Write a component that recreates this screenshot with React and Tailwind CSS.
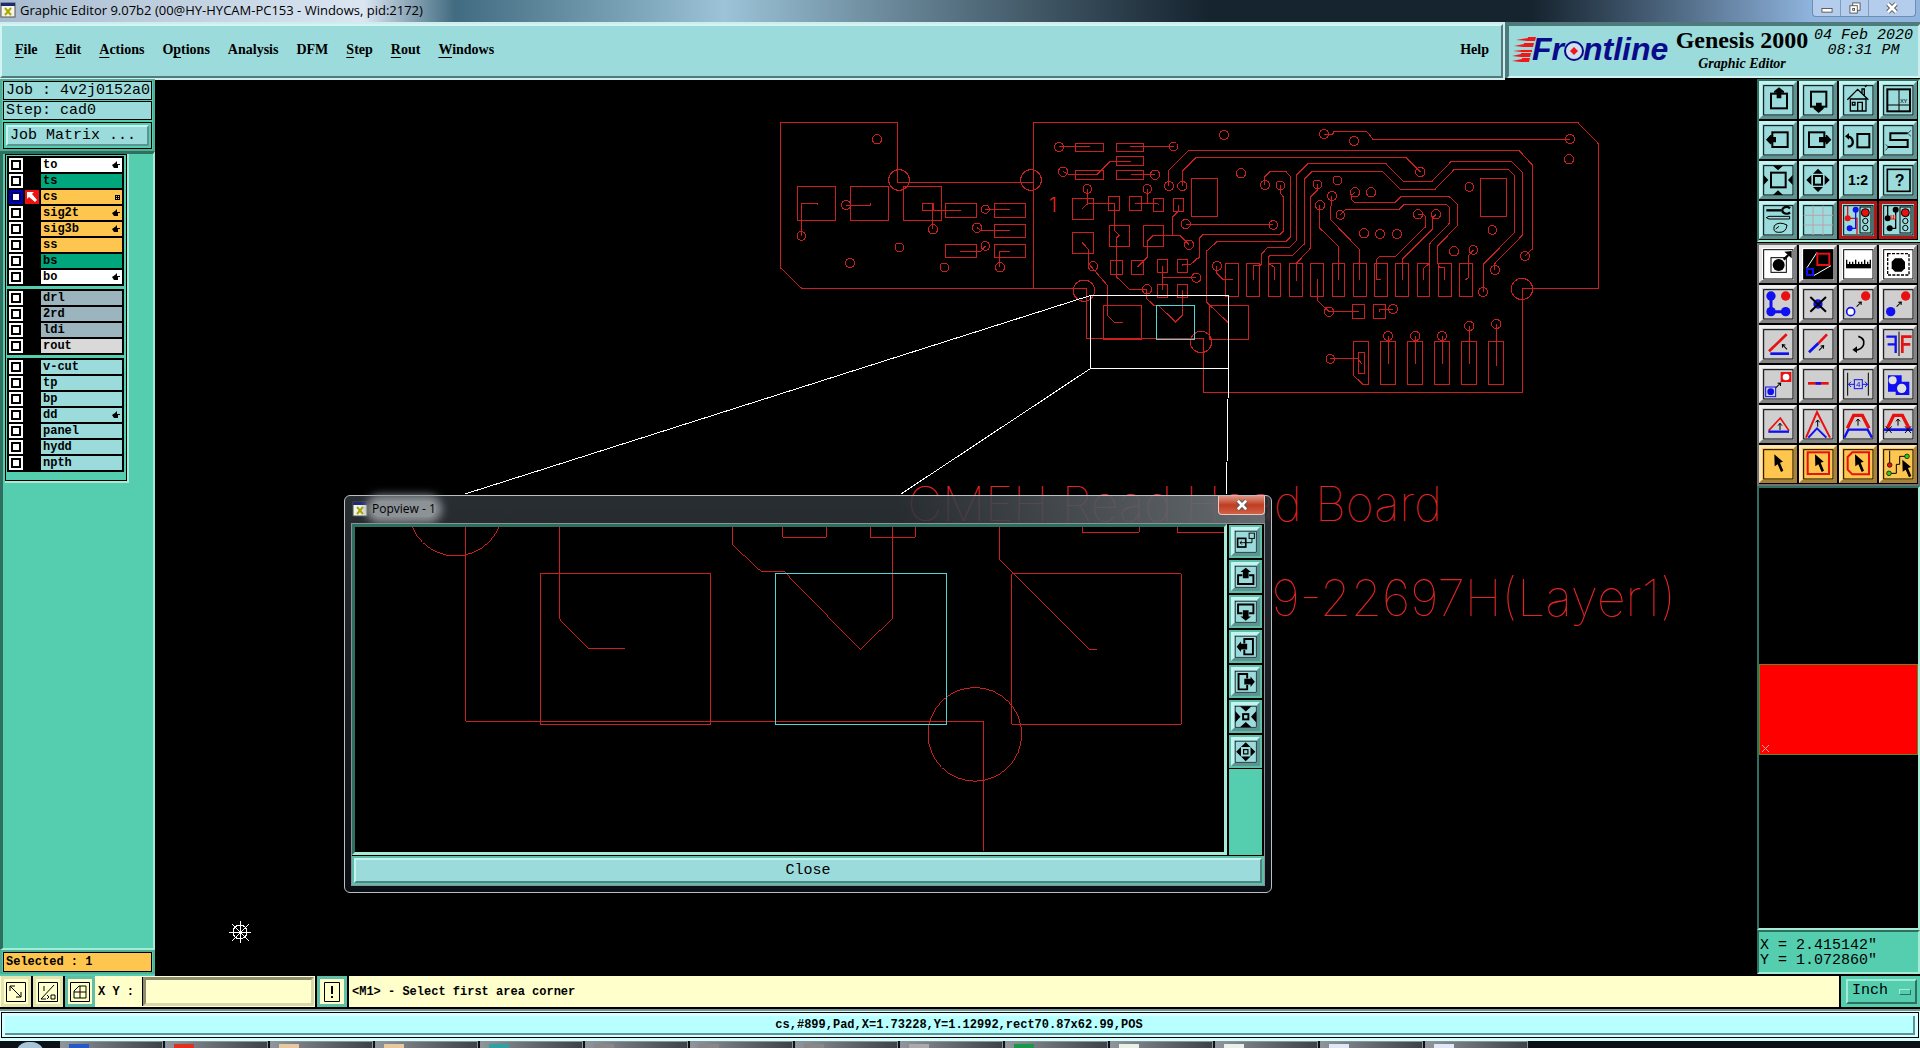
import { useState } from 'react';

const menus = [
  ['F', 'ile'],
  ['E', 'dit'],
  ['A', 'ctions'],
  ['', 'O', 'p', 'tions'],
  ['', 'Analysis'],
  ['', 'DFM'],
  ['S', 'tep'],
  ['R', 'out'],
  ['W', 'indows'],
];

const layerGroups = [
  [
    { name: 'to', bg: 'bg-white', hand: true },
    { name: 'ts', bg: 'bg-[#00a67c]' },
    { name: 'cs', bg: 'bg-[#ffc64f]', active: true },
    { name: 'sig2t', bg: 'bg-[#ffc64f]', hand: true },
    { name: 'sig3b', bg: 'bg-[#ffc64f]', hand: true },
    { name: 'ss', bg: 'bg-[#ffc64f]' },
    { name: 'bs', bg: 'bg-[#00a67c]' },
    { name: 'bo', bg: 'bg-white', hand: true },
  ],
  [
    { name: 'drl', bg: 'bg-[#9bb4be]' },
    { name: '2rd', bg: 'bg-[#9bb4be]' },
    { name: 'ldi', bg: 'bg-[#9bb4be]' },
    { name: 'rout', bg: 'bg-[#d9d9d9]' },
  ],
  [
    { name: 'v-cut', bg: 'bg-[#9bdbdb]' },
    { name: 'tp', bg: 'bg-[#9bdbdb]' },
    { name: 'bp', bg: 'bg-[#9bdbdb]' },
    { name: 'dd', bg: 'bg-[#9bdbdb]', hand: true },
    { name: 'panel', bg: 'bg-[#9bdbdb]' },
    { name: 'hydd', bg: 'bg-[#9bdbdb]' },
    { name: 'npth', bg: 'bg-[#9bdbdb]' },
  ],
];

const MONO = "font-['Liberation_Mono',monospace]";
const RED = '#e81010';
const BLUE = '#1010f0';

// bevel styles shared by the tool buttons
const tones = {
  teal: 'bg-[#9bdbdb] border-t-[#c4f4f2] border-l-[#c4f4f2] border-b-[#5c9494] border-r-[#5c9494]',
  red: 'bg-[#9bdbdb] border-[#b01818]',
  white: 'bg-white border-t-[#e8e8e8] border-l-[#e8e8e8] border-b-[#808080] border-r-[#808080]',
  gray: 'bg-[#cfcfcf] border-t-[#f0f0f0] border-l-[#f0f0f0] border-b-[#848484] border-r-[#848484]',
  orange: 'bg-[#ffc64f] border-t-[#ffe6b0] border-l-[#ffe6b0] border-b-[#a8823a] border-r-[#a8823a]',
};

const Cursor = ({ x = 0, y = 0 }) => (
  <path d="M46 28L72 50L63 53L73 77L66 81L56 58L47 64Z" fill="#000" transform={`translate(${x} ${y})`} />
);

const TinyArrow = ({ x, y, r = 0 }) => (
  <path d="M0 20V0M-6 7L0 0L6 7" transform={`translate(${x} ${y}) rotate(${r})`} stroke="#000" strokeWidth="3" />
);

const Traffic = () => (
  <g stroke="#000" strokeWidth="3">
    <rect x="63" y="18" width="33" height="78" />
    <circle cx="79" cy="35" r="12" fill={RED} />
    <circle cx="79" cy="60" r="8" />
    <circle cx="79" cy="81" r="8" />
  </g>
);

const viewTools = [
  { label: 'Pan up', icon: <><rect x="36" y="38" width="48" height="44" stroke="#000" strokeWidth="6" /><path d="M60 19L75 31V35H67V52H53V35H45V31Z" fill="#000" /></> },
  { label: 'Pan down', icon: <><rect x="36" y="32" width="46" height="45" stroke="#000" strokeWidth="6" /><path d="M59 96L74 83V78H68V65H51V78H44V83Z" fill="#000" /></> },
  { label: 'Home', icon: <><path d="M25 56L56 25L88 56M34 54H81V90H34ZM56 90V64H70V90M40 64H48V72H40ZM69 36V24H76V44M78 18L84 12" stroke="#000" strokeWidth="4" /></> },
  { label: 'Zoom to XY', icon: <><rect x="25" y="25" width="68" height="66" stroke="#000" strokeWidth="6" /><path d="M60 25V91M25 72H93" stroke="#000" strokeWidth="3" /><text x="64" y="66" fontSize="18" fill="#000">XY</text></> },
  { label: 'Pan left', icon: <><rect x="40" y="34" width="46" height="44" stroke="#000" strokeWidth="6" /><path d="M21 56L34 42H38V48H51V64H38V70H34Z" fill="#000" /></> },
  { label: 'Pan right', icon: <><rect x="30" y="34" width="46" height="44" stroke="#000" strokeWidth="6" /><path d="M97 56L84 42H80V48H60V64H80V70H84Z" fill="#000" /></> },
  { label: 'Previous view', icon: <><rect x="55" y="39" width="36" height="40" stroke="#000" strokeWidth="6" /><path d="M26 76H33Q43 72 41 60Q39 48 26 46" stroke="#000" strokeWidth="7" /><path d="M18 46L30 36V56Z" fill="#000" /></> },
  { label: 'Serpentine', icon: <><path d="M86 37H34V57H86V78H26" stroke="#000" strokeWidth="6" /><path d="M86 37L96 28M86 37L96 46M28 78L20 70M28 78L20 88" stroke="#000" strokeWidth="2" /></> },
  { label: 'Zoom in', icon: <><rect x="36" y="35" width="44" height="44" stroke="#000" strokeWidth="6" /><path d="M42 14H72L57 28ZM42 102H72L57 88ZM14 42V72L28 57ZM101 42V72L87 57Z" fill="#000" /></> },
  { label: 'Zoom out', icon: <><rect x="45" y="45" width="24" height="26" stroke="#000" strokeWidth="6" /><path d="M42 38H72L57 23ZM42 78H72L57 93ZM37 42V72L22 57ZM77 42V72L92 57Z" fill="#000" /></> },
  { label: 'Scale 1:2', icon: <text x="57" y="72" fontSize="42" fontWeight="bold" textAnchor="middle" fill="#000" fontFamily="Liberation Sans">1:2</text> },
  { label: 'Help', icon: <><rect x="25" y="25" width="68" height="66" stroke="#000" strokeWidth="5" /><text x="62" y="76" fontSize="48" fontWeight="bold" textAnchor="middle" fill="#000" fontFamily="Liberation Sans">?</text></> },
  { label: 'Settings', icon: <><path d="M22 28H66" stroke="#000" strokeWidth="7" /><path d="M93 22A13 10 0 1 0 93 34" stroke="#000" strokeWidth="7" /><path d="M22 50L30 46H92V54H30ZM84 72Q60 60 46 74Q40 94 58 94Q82 96 84 72M50 84L60 76" stroke="#000" strokeWidth="3" /></> },
  { label: 'Grid', icon: <path d="M42 14V102M72 14V102M14 43H102M14 72H102" stroke="#b8a4ac" strokeWidth="3" /> },
  { label: 'Online DRC', tone: 'red', icon: <><path d="M26 14V52H54V100" stroke={RED} strokeWidth="4" /><circle cx="26" cy="52" r="9" fill={RED} /><path d="M50 26V82H32" stroke={BLUE} strokeWidth="4" /><circle cx="50" cy="26" r="9" fill={BLUE} /><circle cx="32" cy="82" r="9" fill={BLUE} /><Traffic /></> },
  { label: 'Net DRC', tone: 'red', icon: <><path d="M26 14V52M50 26V82H32" stroke="#000" strokeWidth="4" /><circle cx="26" cy="52" r="9" fill="#000" /><circle cx="50" cy="26" r="9" fill="#000" /><circle cx="32" cy="82" r="9" fill="#000" /><path d="M34 54H50M36 42V54M43 42V54M49 42V54" stroke={RED} strokeWidth="3" /><Traffic /></> },
];

const editTools = [
  { label: 'Move feature', tone: 'white', icon: <><rect x="36" y="38" width="46" height="44" stroke="#000" strokeWidth="3" /><circle cx="59" cy="60" r="18" fill="#000" /><path d="M74 44L88 30" stroke="#000" strokeWidth="7" /><path d="M98 18V40L76 20Z" fill="#000" /></> },
  { label: 'Popview', tone: 'white', icon: <><rect x="14" y="14" width="88" height="88" fill="#000" /><path d="M24 68L54 22M44 92L96 62" stroke="#fff" strokeWidth="3" /><rect x="55" y="26" width="36" height="34" stroke={RED} strokeWidth="6" /><rect x="24" y="72" width="18" height="18" stroke={BLUE} strokeWidth="6" /></> },
  { label: 'Measure', tone: 'white', icon: <><rect x="21" y="57" width="75" height="13" fill="#000" /><path d="M23 44V58M32 50V58M41 50V58M50 44V58M59 50V58M68 50V58M77 44V58M86 50V58M94 44V58" stroke="#000" strokeWidth="4" /></> },
  { label: 'Select area', tone: 'white', icon: <><rect x="26" y="26" width="64" height="64" stroke="#000" strokeWidth="4" strokeDasharray="9 4" /><path d="M48 40H68L78 50V70L68 80H48L38 70V50Z" fill="#000" /></> },
  { label: 'Add feature', icon: <><path d="M36 33V80H80" stroke={BLUE} strokeWidth="9" /><circle cx="36" cy="33" r="14" fill={BLUE} /><circle cx="36" cy="80" r="14" fill={BLUE} /><circle cx="80" cy="80" r="14" fill={BLUE} /><circle cx="80" cy="33" r="14" fill={RED} /></> },
  { label: 'Delete', icon: <><circle cx="57" cy="57" r="14" fill={BLUE} /><path d="M34 36L81 80M81 36L34 80" stroke="#000" strokeWidth="6" /></> },
  { label: 'Copy', icon: <><circle cx="35" cy="80" r="12" stroke={BLUE} strokeWidth="5" fill="#fff" /><circle cx="80" cy="33" r="14" fill={RED} /><TinyArrow x={67} y={51} r={45} /></> },
  { label: 'Move', icon: <><circle cx="35" cy="80" r="14" fill={BLUE} /><circle cx="80" cy="33" r="14" fill={RED} /><TinyArrow x={67} y={51} r={45} /></> },
  { label: 'Rotate', icon: <><path d="M30 79L83 28" stroke={RED} strokeWidth="8" /><path d="M34 86H90" stroke={BLUE} strokeWidth="8" /><TinyArrow x={70} y={59} r={-45} /></> },
  { label: 'Stretch line', icon: <><path d="M58 55L84 28" stroke={RED} strokeWidth="8" /><path d="M30 82L58 55" stroke={BLUE} strokeWidth="8" /><TinyArrow x={74} y={62} r={45} /></> },
  { label: 'Undo', icon: <><path d="M58 34Q78 40 74 58Q70 74 46 76" stroke="#000" strokeWidth="5" /><path d="M40 74L54 64V84Z" fill="#000" /></> },
  { label: 'Mirror', icon: <><path d="M22 35H50V84M26 58H50" stroke={BLUE} strokeWidth="7" /><path d="M60 20V93" stroke="#000" strokeWidth="3" /><path d="M98 35H70V84M70 58H94" stroke={RED} strokeWidth="8" /></> },
  { label: 'Change symbol', icon: <><rect x="65" y="21" width="32" height="30" fill={RED} /><circle cx="81" cy="36" r="10" fill="#fff" /><rect x="20" y="66" width="30" height="29" stroke={BLUE} strokeWidth="3" /><circle cx="35" cy="80" r="10" fill={BLUE} /><TinyArrow x={65} y={54} r={45} /></> },
  { label: 'Break line', icon: <><path d="M27 55H89" stroke={RED} strokeWidth="8" /><path d="M50 55H66" stroke={BLUE} strokeWidth="8" /></> },
  { label: 'Spacing', icon: <><path d="M26 23V92M88 23V92" stroke="#000" strokeWidth="3" /><path d="M28 58H46M70 58H86M36 50L29 58L36 66M78 50L85 58L78 66" stroke={BLUE} strokeWidth="3" /><rect x="46" y="44" width="24" height="27" stroke={BLUE} strokeWidth="3" /><text x="58" y="67" fontSize="24" textAnchor="middle" fill={BLUE} fontFamily="Liberation Sans">4</text></> },
  { label: 'Surface', icon: <><path d="M27 31H68V50H91V90H50V80H27Z" fill={BLUE} /><circle cx="41" cy="46" r="12" fill="#e0e0e0" /><circle cx="68" cy="70" r="14" fill="#e0e0e0" /></> },
  { label: 'Reshape corner', icon: <><path d="M29 77L64 39L90 77" stroke={RED} strokeWidth="5" /><path d="M28 80H90" stroke={BLUE} strokeWidth="7" /><TinyArrow x={63} y={55} /></> },
  { label: 'Reshape peak', icon: <><path d="M21 98L54 21L93 98" stroke={RED} strokeWidth="6" /><path d="M28 98L54 70L82 98" stroke={BLUE} strokeWidth="6" /><TinyArrow x={56} y={45} /></> },
  { label: 'Offset segment', icon: <><path d="M25 70L44 31H70L90 70" stroke={RED} strokeWidth="10" /><path d="M16 98L28 74H86L99 98" stroke={BLUE} strokeWidth="7" /><TinyArrow x={57} y={42} /></> },
  { label: 'Move segment', icon: <><path d="M25 70L44 31H70L90 70" stroke={RED} strokeWidth="10" /><path d="M15 74H101" stroke={BLUE} strokeWidth="8" /><path d="M20 64L38 84M38 64L20 84M78 64L96 84M96 64L78 84" stroke="#000" strokeWidth="3" /><TinyArrow x={57} y={42} /></> },
  { label: 'Single select', tone: 'orange', icon: <Cursor /> },
  { label: 'Frame select', tone: 'orange', icon: <><rect x="26" y="22" width="64" height="65" stroke={RED} strokeWidth="6" /><Cursor x={2} /></> },
  { label: 'Polygon select', tone: 'orange', icon: <><path d="M26 36L40 22H90V88H40L26 74Z" stroke={RED} strokeWidth="6" /><Cursor x={2} /></> },
  { label: 'Net select', tone: 'orange', icon: <><path d="M32 17V60M30 85H52V58H62V34H84" stroke="#000" strokeWidth="3" /><circle cx="32" cy="60" r="7" fill={RED} stroke="#000" strokeWidth="2" /><circle cx="84" cy="34" r="7" fill="#20d020" stroke="#000" strokeWidth="2" /><circle cx="30" cy="85" r="7" fill="#20d020" stroke="#000" strokeWidth="2" /><Cursor x={24} y={16} /></> },
];

// the popview buttons use heavier versions of the pan and zoom drawings
const popTools = [
  { label: 'Popview window', icon: <><rect x="24" y="44" width="34" height="36" stroke="#000" strokeWidth="7" /><rect x="72" y="22" width="22" height="22" stroke="#000" strokeWidth="4" /><path d="M34 62H84V44M42 54L34 62L42 70" stroke="#000" strokeWidth="4" /></> },
  { label: 'Pan up', icon: <><path d="M44 52H26V88H90V52H72" stroke="#000" strokeWidth="8" /><path d="M58 20L80 38H70V64H46V38H36Z" fill="#000" /></> },
  { label: 'Pan down', icon: <><path d="M44 64H26V28H90V64H72" stroke="#000" strokeWidth="8" /><path d="M58 96L80 78H70V52H46V78H36Z" fill="#000" /></> },
  { label: 'Pan left', icon: <><path d="M52 44V26H88V90H52V72" stroke="#000" strokeWidth="8" /><path d="M20 58L38 36V46H64V70H38V80Z" fill="#000" /></> },
  { label: 'Pan right', icon: <><path d="M64 44V26H28V90H64V72" stroke="#000" strokeWidth="8" /><path d="M96 58L78 36V46H52V70H78V80Z" fill="#000" /></> },
  { label: 'Zoom in', icon: <><rect x="47" y="47" width="22" height="22" stroke="#000" strokeWidth="8" /><path d="M34 14H82L58 36ZM34 102H82L58 80ZM14 34V82L36 58ZM102 34V82L80 58Z" fill="#000" /></> },
  { label: 'Zoom out', icon: <><rect x="49" y="49" width="18" height="18" stroke="#000" strokeWidth="5" /><path d="M38 38H78L58 18ZM38 78H78L58 98ZM38 38V78L18 58ZM78 38V78L98 58Z" fill="#000" /></> },
];

function ToolButton({ label, icon, tone = 'teal', small }) {
  return (
    <button
      type="button"
      aria-label={label}
      title={label}
      className={`${small ? 'size-[29px]' : 'size-[38px]'} border-3 ${tones[tone]}`}
    >
      <svg viewBox="9 9 96 96" className="block size-full" fill="none">
        <rect x="14" y="14" width="88" height="88" stroke="#000" strokeWidth="3" />
        {icon}
      </svg>
    </button>
  );
}

function WindowIcon() {
  return (
    <svg viewBox="0 0 16 16" className="size-4 shrink-0">
      <rect x="1" y="1" width="14" height="14" fill="#f4f4e8" stroke="#555" />
      <rect x="1" y="1" width="14" height="3" fill="#202878" />
      <path d="M5 6L11 13M11 6L5 13" stroke="#a8a800" strokeWidth="2" />
    </svg>
  );
}

function TitleBar() {
  return (
    <div className="flex h-[22px] shrink-0 items-center bg-[#416b80]">
      <div className="flex h-full items-center gap-1 bg-linear-to-r from-[#a8bccf] via-[#dbe6f2] via-80% to-[#416b80] pr-8 pb-[2px]">
        <WindowIcon />
        <h1 className="font-['Open_Sans',sans-serif] text-[13px] leading-5 whitespace-nowrap text-black">
          Graphic Editor 9.07b2 (00@HY-HYCAM-PC153 - Windows, pid:2172)
        </h1>
      </div>
      <div className="h-full flex-1 bg-linear-to-r from-[#416b80] from-0% via-[#9cc3d8] via-25% to-[#16242f] to-70%" />
      <div className="h-full w-70 bg-linear-to-r from-[#16242f] to-[#8fb4de]" />
      <div className="flex h-full items-start bg-[#8fb4de] pr-1">
        <div className="flex h-[17px] overflow-hidden rounded-b border border-t-0 border-[#6d8db5] bg-[#b5cdec]">
          <button type="button" aria-label="Minimize" className="flex w-7 items-center justify-center border-r border-[#7f9cc0]">
            <svg viewBox="0 0 13 13" className="size-3"><rect x="1" y="7" width="11" height="4" fill="#fff" stroke="#555" /></svg>
          </button>
          <button type="button" aria-label="Restore" className="flex w-7 items-center justify-center border-r border-[#7f9cc0]">
            <svg viewBox="0 0 13 13" className="size-3" fill="#fff" stroke="#555"><rect x="4" y="1" width="8" height="8" /><rect x="1" y="4" width="8" height="8" /><rect x="4" y="7" width="2" height="2" /></svg>
          </button>
          <button type="button" aria-label="Close" className="flex w-[46px] items-center justify-center">
            <svg viewBox="0 0 13 13" className="size-3"><path d="M2 2L11 11M11 2L2 11" stroke="#555" strokeWidth="5" /><path d="M2 2L11 11M11 2L2 11" stroke="#fff" strokeWidth="3" /></svg>
          </button>
        </div>
      </div>
    </div>
  );
}

function Logo() {
  return (
    <svg viewBox="0 -6 162 44" className="h-11 w-[162px] shrink-0" role="img" aria-label="Frontline">
      <g fill="#f01818">
        <path d="M4 6L16 4V3H24L23 7H16Z M2 12L12 10V9H22L21 13H12Z M1 17L10 16H20V18H10Z M0 22L9 20V19H19L18 23H9Z M0 27L10 25V24H18L17 28H9Z" />
      </g>
      <g fill="#0a0a8c" fontFamily="Liberation Sans" fontWeight="bold" fontStyle="italic" fontSize="32">
        <text x="20" y="26">Fr</text>
        <text x="71" y="26">ntline</text>
      </g>
      <circle cx="62" cy="17" r="9" fill="#cfe0ee" stroke="#0a0a8c" strokeWidth="2" />
      <path d="M62 13L66 17L62 21L58 17Z" fill="#f01818" />
    </svg>
  );
}

function Header() {
  return (
    <header className="flex h-14 shrink-0 bg-[#4f7a7c] pt-[2px] font-['Liberation_Serif',serif] font-bold">
      <nav className="flex min-w-0 flex-1 items-center gap-[18px] border-2 border-t-[#d4f4f2] border-r-[#55797b] border-b-[#55797b] border-l-[#d4f4f2] bg-[#9bdbdb] pr-3 pb-[2px] pl-[13px] text-[14px] outline-2 -outline-offset-0 outline-[#cdeeee]">
        {menus.map((parts) => (
          <button key={parts.join('')} type="button" className="leading-5">
            {parts.map((part, i) => (
              <span
                key={part}
                className={(i === 0 && part) || (parts.length === 4 && i === 2) ? 'underline underline-offset-3' : ''}
              >
                {part}
              </span>
            ))}
          </button>
        ))}
        <button type="button" className="ml-auto leading-5">Help</button>
      </nav>
      <div className="ml-[4px] flex w-[413px] shrink-0 items-center border-2 border-t-[#4f7a7c] border-r-[#cdeeee] border-b-[#d4f4f2] border-l-[#4f7a7c] bg-[#9bdbdb] pb-[2px] pl-[3px]">
        <Logo />
        <div className="flex w-[136px] shrink-0 flex-col items-center">
          <span className="text-[24px] leading-7 whitespace-nowrap">Genesis 2000</span>
          <span className="text-[14px] leading-5 italic">Graphic Editor</span>
        </div>
        <div className={`${MONO} ml-1 self-start pt-[2px] text-center text-[15px] leading-[15px] font-normal whitespace-nowrap italic`}>
          04 Feb 2020
          <br />
          08:31 PM
        </div>
      </div>
    </header>
  );
}

function LayerRow({ layer }) {
  return (
    <label className="flex h-[14px] gap-[2px]">
      <input
        type="checkbox"
        defaultChecked={layer.active}
        className="size-[14px] appearance-none border-2 border-white bg-white ring-2 ring-black ring-inset checked:border-[#0000b8] checked:ring-[#00006a]"
      />
      <span className={`size-[14px] ${layer.active ? 'bg-[#f01010]' : ''}`}>
        {layer.active && (
          <svg viewBox="0 0 14 14" className="size-full"><path d="M2 2H9L7 4L12 10L10 12L4 7L2 9Z" fill="#fff" /></svg>
        )}
      </span>
      <span className={`flex w-[81px] items-center justify-between px-[2px] ${layer.bg}`}>
        <span className="leading-[14px]">{layer.name}</span>
        {layer.hand && (
          <svg viewBox="0 0 8 8" className="size-2"><path d="M0 4L3 2L5 0V3H8V4H6V7H2Z" fill="#000" /></svg>
        )}
        {layer.active && (
          <svg viewBox="0 0 5 5" className="size-[5px]" shapeRendering="crispEdges"><path d="M.5 .5H4.5V4.5H.5ZM2.5 .5V4.5M.5 2.5H4.5" fill="none" stroke="#000" /></svg>
        )}
      </span>
    </label>
  );
}

function Sidebar() {
  return (
    <aside className={`${MONO} flex w-[155px] shrink-0 flex-col bg-[#55ceb0] text-black`}>
      <div className="border-2 border-[#4fae95] px-px text-[15px]">
        <div className="h-[19px] border border-black bg-[#9bdbdb] px-[2px] leading-[17px] whitespace-nowrap">Job : 4v2j0152a0</div>
        <div className="mt-px h-[19px] border border-black bg-[#9bdbdb] px-[2px] leading-[17px]">Step: cad0</div>
        <div className="mt-[2px] border border-black p-[2px]">
          <button
            type="button"
            className="block h-[21px] w-full border-2 border-t-[#c4f4f2] border-r-[#5c9494] border-b-[#5c9494] border-l-[#c4f4f2] bg-[#9bdbdb] pl-[2px] text-left leading-[17px]"
          >
            Job Matrix ...
          </button>
        </div>
      </div>
      <div className="flex flex-1 flex-col items-start border-t-3 border-r-2 border-b-2 border-l-3 border-t-[#2f6f60] border-r-[#a5ecd6] border-b-[#a5ecd6] border-l-[#2f6f60] pl-[2px]">
        <div className="border-r-2 border-b-2 border-[#a5ecd6]">
          <div className="flex flex-col gap-[3px] border border-black pt-px pr-[2px] pb-2 pl-px text-[12px] font-bold">
            {layerGroups.map((group) => (
              <div key={group[0].name} className="flex flex-col gap-[2px] bg-black p-[2px]">
                {group.map((layer) => (
                  <LayerRow key={layer.name} layer={layer} />
                ))}
              </div>
            ))}
          </div>
        </div>
      </div>
      <div className="mb-[2px] border-2 border-[#4fae95] px-px">
        <div className="h-5 border border-black bg-[#ffc64f] px-[2px] text-[12px] leading-[18px] font-bold">Selected : 1</div>
      </div>
    </aside>
  );
}

// vias on the left half of the board, [x, y, r]
const leftVias = [
  [321, 88, 14], [387, 210, 31], [783, 210, 31], [94, 378, 13], [228, 285, 14], [489, 358, 14], [388, 412, 13],
  [240, 459, 14], [646, 298, 12], [621, 353, 14], [646, 408, 13], [523, 472, 13], [690, 472, 14], [867, 111, 14],
  [1211, 109, 13], [879, 185, 14], [1155, 194, 14], [952, 237, 13], [1132, 237, 13], [1197, 228, 14], [1237, 228, 14],
  [1247, 342, 14], [1257, 404, 14], [969, 469, 14], [942, 542, 32], [1131, 538, 14], [1279, 503, 14],
];

const leftPads = [
  [82, 229, 115, 102], [241, 229, 115, 102], [400, 229, 115, 102], [526, 280, 94, 42], [673, 280, 94, 42],
  [673, 343, 94, 39], [526, 403, 94, 39], [673, 403, 94, 39], [916, 100, 85, 24], [1039, 100, 82, 24],
  [1039, 139, 82, 27], [916, 181, 85, 27], [1039, 181, 82, 27], [907, 265, 64, 63], [907, 367, 64, 63],
  [1015, 259, 34, 42], [1078, 259, 36, 42], [1150, 265, 31, 39], [1210, 265, 31, 39], [1018, 346, 61, 63],
  [1120, 346, 61, 63], [1021, 451, 37, 42], [1084, 451, 37, 42], [1162, 448, 31, 39], [1222, 448, 31, 39],
  [1162, 523, 31, 39], [1222, 523, 31, 39], [1000, 586, 115, 102], [457, 280, 33, 21],
];

const rightVias = [
  [102, 75, 14], [402, 72, 14], [492, 93, 14], [1140, 87, 14], [1137, 148, 14], [153, 190, 14], [225, 225, 14],
  [271, 226, 13], [382, 223, 13], [442, 211, 13], [691, 186, 14], [426, 258, 14], [495, 247, 14], [543, 247, 14],
  [390, 286, 14], [451, 315, 13], [684, 313, 14], [738, 313, 14], [838, 231, 13], [250, 345, 13], [522, 370, 14],
  [570, 372, 14], [621, 372, 14], [907, 360, 13], [792, 424, 14], [850, 420, 13], [1005, 438, 14], [915, 480, 14],
  [879, 546, 14], [996, 537, 32], [81, 468, 14], [417, 605, 14], [609, 597, 14], [421, 747, 13], [594, 678, 14],
  [676, 678, 14], [756, 678, 14], [838, 648, 14], [919, 642, 14], [33, 696, 32],
];

const rightPads = [
  [4, 205, 79, 115], [871, 205, 79, 115], [106, 460, 40, 99], [169, 460, 40, 99], [235, 460, 37, 99],
  [298, 460, 40, 99], [361, 460, 40, 99], [427, 460, 37, 99], [490, 460, 40, 99], [553, 460, 40, 99],
  [616, 460, 40, 99], [682, 460, 37, 99], [745, 460, 40, 99], [808, 460, 40, 99], [487, 583, 37, 43],
  [550, 583, 37, 43], [571, 694, 46, 130], [652, 694, 46, 130], [733, 694, 46, 130], [814, 694, 46, 130],
  [895, 694, 46, 130], [58, 586, 118, 102], [505, 727, 19, 63],
];

const leftTraces = `M790 217H383V37H31V473L95 535H949V685H1300M790 535V37H1290
M94 378V280H142L144 284M228 286H302V280M490 301H573M489 358V280M646 298H719V301M621 353L632 361H719
M646 408L632 424H571M690 472V424H719M867 111H959M1211 109H1080M879 185L895 193H981L1021 154H1082M1155 195H1090L1084 192
M952 237V282L936 296M952 280H1033V360L1048 376L1039 385V500L1078 538H1131M1132 237V280H1096M1132 280H1162L1166 284
M1225 284V304L1207 322V376M1257 404L1229 376H1150L1132 394V442L1102 472M936 397L955 418V460L1012 526V616L1033 637H1058
M1177 468V541M1177 502H1279M1237 468V463H1262L1290 440V385M1237 541V616L1217 636L1165 586H1152L1129 565V538
M1197 228V180L1256 121H1290M1237 228V184L1279 142H1290M1247 343H1290M1290 385V440`;

const rightTraces = `M0 37H1163L1226 102V535H997V847H40V685H0
M402 73H428L432 64H530L549 88H1140M0 121H987L1028 166V416L1005 438M0 160L18 142H647L691 186
M225 225V200L241 184H287L301 199V382L289 394H82L49 424V576L115 638M271 226V250L280 260V364L271 373H40L28 385V440L0 464M0 343H250
M190 510V466H210L214 462V433L233 412H299L319 392V196L355 160H587L640 214H726L784 154H964L997 187V376L915 460V480
M253 510V472L236 460V440L240 436H308L343 402V208L367 184H577L631 238H735L793 178H955L973 196V368L880 463V546
M319 512V460L361 415V262L382 241V223M390 286V355L445 409V510M426 258V284L421 290V328L508 418V510
M495 247L484 256V268L493 277H616L633 260H778L802 283V347L742 409V460L750 472H763V510
M451 315L466 298H628L643 283H768L778 292V340L718 402V460L700 476V510M684 313H700L707 320V350L617 439H570L559 448V508H573
M738 313L727 324V358L637 448V510M850 420L836 436V502L826 510M81 468V490L98 508H128M382 508V572L417 604H506M609 598H568V605
M421 745H502L516 762M595 678V762M676 678V762M757 678V762M838 648V762M919 642V768
M490 694H536V824H520L490 796Z`;

function Shapes({ pads, vias, traces }) {
  return (
    <>
      <path d={traces} vectorEffect="non-scaling-stroke" />
      {pads.map(([x, y, w, h]) => (
        <rect key={`${x}-${y}`} x={x} y={y} width={w} height={h} vectorEffect="non-scaling-stroke" />
      ))}
      {vias.map(([x, y, r]) => (
        <circle key={`${x}-${y}`} cx={x} cy={y} r={r} vectorEffect="non-scaling-stroke" />
      ))}
    </>
  );
}

function Board() {
  return (
    <svg viewBox="155 79 1602 897" className="block size-full" fill="none" stroke="#cc2020" strokeWidth="1">
      <g shapeRendering="crispEdges">
        <g transform="translate(770 110) scale(.33333)">
          <Shapes pads={leftPads} vias={leftVias} traces={leftTraces} />
        </g>
        <g transform="translate(1190 110) scale(.33333)">
          <Shapes pads={rightPads} vias={rightVias} traces={rightTraces} />
        </g>
        <rect x="1156.5" y="305.5" width="38" height="34" stroke="#4fd8d8" />
        <path d="M465 494L1090.5 295.5H1228.5V368.5H1090.5V295.5M1090.5 368.5L901 494M1228.5 368L1226.5 494" stroke="#fff" />
      </g>
      <g stroke="none" fill="#e42424" fontFamily="Inter" fontWeight="100">
        <text x="1049" y="212" fontSize="20" fontWeight="300">1</text>
        <text x="1442" y="521" fontSize="48" textAnchor="end">CMEH Read Head Board</text>
        <text x="1676" y="616" fontSize="50" textAnchor="end">9-22697H(Layer1)</text>
      </g>
      <g stroke="#fff" shapeRendering="crispEdges">
        <circle cx="240" cy="932" r="7" />
        <path d="M229 932.5H251M240.5 921V943M232 924L249 941M249 924L232 941" />
      </g>
    </svg>
  );
}

function Popview({ onClose }) {
  return (
    <section
      aria-label="Popview - 1"
      className="absolute top-[416px] left-[189px] flex h-[398px] w-[928px] flex-col rounded-md border border-[#b8c0c4] bg-linear-to-b from-[#30363c]/85 to-[#0a0d14] px-[6px] pb-[6px]"
    >
      <div className="flex h-[27px] shrink-0 items-center gap-1 bg-linear-to-r from-transparent from-60% to-[#80868a]/70 pb-[2px] pl-px">
        <WindowIcon />
        <h2 className="rounded-full bg-[#8c9296] font-['Open_Sans',sans-serif] text-[12px] leading-4 text-black shadow-[0_0_8px_6px_#8c9296]">Popview - 1</h2>
        <button
          type="button"
          aria-label="Close popview"
          onClick={onClose}
          className="ml-auto flex h-[19px] w-[47px] items-center justify-center self-start rounded-b border border-t-0 border-[#e8c8c0] bg-linear-to-b from-[#dc9484] via-[#c03c20] to-[#d06048]"
        >
          <svg viewBox="0 0 13 13" className="size-3"><path d="M2 2L11 11M11 2L2 11" stroke="#555" strokeWidth="5" /><path d="M2 2L11 11M11 2L2 11" stroke="#fff" strokeWidth="3" /></svg>
        </button>
      </div>
      <div className="flex min-h-0 flex-1 flex-col border border-[#8a9498] bg-black">
        <div className="flex min-h-0 flex-1">
          <div className="min-w-0 flex-1 border-3 border-t-[#2f6f60] border-r-[#a5ecd6] border-b-[#a5ecd6] border-l-[#2f6f60]">
            <svg viewBox="354 527 872 326" className="block size-full" fill="none" stroke="#cc2020" shapeRendering="crispEdges">
              <circle cx="455" cy="509" r="47" />
              <circle cx="976" cy="735" r="47" />
              <path d="M465 527V722H985V852M559 527V619L588 649H625M733 527V545L762 572H785L861 650L893 619V527M1001 527V560L1091 650H1099" />
              <path d="M540 574H711V725H540ZM1013 574H1183V725H1013ZM783 527V537H827V527M871 527V537H916V527M1084 527V532H1141V527M1179 527V532H1226" />
              <rect x="776" y="574" width="172" height="151" stroke="#4fd8d8" />
            </svg>
          </div>
          <div className="flex w-[37px] shrink-0 flex-col gap-[2px] bg-black px-[2px] pt-px">
            {popTools.map((tool) => (
              <div key={tool.label} className="flex bg-[#5ebfa6] p-[2px]">
                <ToolButton {...tool} small />
              </div>
            ))}
            <div className="-mt-px flex-1 bg-[#55ceb0]" />
          </div>
        </div>
        <div className="h-[30px] shrink-0 border-t border-black bg-[#5ebfa6] p-[2px]">
          <button
            type="button"
            onClick={onClose}
            className={`${MONO} block h-full w-full border-2 border-t-[#c4f4f2] border-r-[#4c8484] border-b-[#4c8484] border-l-[#c4f4f2] bg-[#9bdbdb] text-[15px] leading-5`}
          >
            Close
          </button>
        </div>
      </div>
    </section>
  );
}

function ToolPanel() {
  return (
    <aside className="flex w-[163px] shrink-0 flex-col bg-black">
      <div className="grid grid-cols-[repeat(4,38px)] gap-[2px] border-2 border-t-[#2f6f60] border-r-[#a5ecd6] border-b-[#a5ecd6] border-l-[#2f6f60] pb-px">
        {viewTools.map((tool) => (
          <ToolButton key={tool.label} {...tool} />
        ))}
      </div>
      <div className="mt-px grid grid-cols-[repeat(4,38px)] gap-[2px] border-2 border-[#707070] pb-px">
        {editTools.map((tool) => (
          <ToolButton key={tool.label} {...tool} tone={tool.tone || 'gray'} />
        ))}
      </div>
      <div className="flex min-h-0 flex-1 flex-col border-2 border-t-[#2f6f60] border-r-[#a5ecd6] border-b-[#a5ecd6] border-l-[#2f6f60]">
        <div className="flex-1" />
        <div className="flex h-[91px] items-end border border-[#70801c] bg-[#ff0000] p-[2px]">
          <svg viewBox="0 0 7 7" className="size-[7px]"><path d="M0 0L7 7M7 0L0 7" stroke="#f0a0a0" /></svg>
        </div>
        <div className="h-[173px]" />
      </div>
      <div className={`${MONO} mb-[2px] h-[44px] border-2 border-t-[#2f6f60] border-r-[#a5ecd6] border-b-[#a5ecd6] border-l-[#2f6f60] bg-[#55ceb0] px-px pt-[6px] text-[15px] leading-[15px]`}>
        <div>X = 2.415142"</div>
        <div>Y = 1.072860"</div>
      </div>
    </aside>
  );
}

function CommandBar() {
  const [xy, setXy] = useState('');
  const iconButton = 'flex w-[30px] items-center justify-center border-3 p-px';

  return (
    <div className={`${MONO} flex h-[33px] shrink-0 border-b-2 border-black bg-[#ffffcc] text-[12px] font-bold`}>
      <button type="button" aria-label="Full view" className={`${iconButton} ml-px border-[#e4e4b0]`}>
        <svg viewBox="0 0 20 20" className="size-5" fill="none" stroke="#000"><path d="M.5 .5H19.5V19.5H.5ZM4 4L15 15M4 9V4H9M10 15H15V10" /></svg>
      </button>
      <button type="button" aria-label="Angle" className={`${iconButton} ml-[2px] border-[#e4e4b0] shadow-[-2px_0_0_#000]`}>
        <svg viewBox="0 0 20 20" className="size-5" fill="none" stroke="#000"><path d="M.5 .5H19.5V19.5H.5ZM3 17L16 3M3 17H8M6 4V9M9 13L11 15L9 17M13 13H17V17H13Z" /></svg>
      </button>
      <button type="button" aria-label="Snap to grid" className={`${iconButton} ml-[2px] border-[#5ebfa6] shadow-[-2px_0_0_#000]`}>
        <svg viewBox="0 0 20 20" className="size-5" fill="none" stroke="#000"><path d="M.5 .5H19.5V19.5H.5ZM4 16V9L9 4H16V16ZM10 4V16M4 10H16" /></svg>
      </button>
      <label htmlFor="xy" className="flex w-[48px] items-center pl-[3px]">X Y :</label>
      <input
        id="xy"
        type="text"
        value={xy}
        onChange={(e) => setXy(e.target.value)}
        className="m-px ml-0 w-[171px] border-3 border-t-[#8c8c70] border-r-[#d8d8a8] border-b-[#d8d8a8] border-l-[#8c8c70] bg-[#ffffcc] px-1 shadow-[-1px_0_0_#000]"
      />
      <button type="button" aria-label="Alert" className={`${iconButton} ml-[2px] border-[#5ebfa6] shadow-[2px_0_0_#000,-2px_0_0_#000]`}>
        <svg viewBox="0 0 20 20" className="size-5" fill="none" stroke="#000"><path d="M2.5 .5H17.5V19.5H2.5Z" /><path d="M10 4V12M10 14V16" strokeWidth="2" /></svg>
      </button>
      <p className="flex flex-1 items-center pl-[5px]">&lt;M1&gt; - Select first area corner</p>
      <div className="w-[81px] border-l-2 border-black bg-[#55ceb0] p-[3px] pl-[5px]">
        <button
          type="button"
          className="flex h-full w-full items-center justify-between border-2 border-t-[#a5ecd6] border-r-[#2f6f60] border-b-[#2f6f60] border-l-[#a5ecd6] px-1 text-[15px] font-normal"
        >
          Inch
          <span className="h-1.5 w-3 border border-t-[#a5ecd6] border-r-[#2f6f60] border-b-[#2f6f60] border-l-[#a5ecd6]" />
        </button>
      </div>
    </div>
  );
}

function StatusBar() {
  return (
    <div className="h-8 shrink-0 border-t-2 border-[#7a9494] bg-[#d8ffff] p-px">
      <div className="h-[26px] border border-black bg-[#d8ffff] px-[3px] pt-[3px] pb-[2px]">
        <p className={`${MONO} h-full border-r-2 border-b-2 border-[#5c9494] bg-[#b8ffff] text-center text-[12px] leading-[18px] font-bold`}>
          cs,#899,Pad,X=1.73228,Y=1.12992,rect70.87x62.99,POS
        </p>
      </div>
    </div>
  );
}

const tasks = [
  'bg-[#2858c8]', 'bg-[#e03020]', 'bg-[#e8c8a0]', 'bg-[#e8c8a0]', 'bg-[#30a0a0]', 'bg-[#888888]', 'bg-[#888888]',
  'bg-[#888888]', 'bg-[#aaaaaa]', 'bg-[#189848]', 'bg-[#e8f0e8]', 'bg-[#e8f0e8]', 'bg-[#e0e8f8]', 'bg-[#e0e8f8]',
];

function Taskbar() {
  return (
    <footer className="flex h-[7px] shrink-0 items-start overflow-hidden bg-[#0c1118] pl-4">
      <span className="mt-px mr-4 h-3 w-7 shrink-0 rounded-t-full bg-[#a8c4d8]" />
      {tasks.map((color, i) => (
        <span key={i} className="mr-[2px] h-[7px] w-[103px] shrink-0 border border-b-0 border-[#8c9298] bg-linear-to-r from-[#90969c] to-[#3c4248] pl-2">
          <span className={`mt-[2px] block h-1 w-5 ${color}`} />
        </span>
      ))}
    </footer>
  );
}

export default function App() {
  const [popOpen, setPopOpen] = useState(true);

  return (
    <div className="flex h-screen flex-col overflow-hidden bg-black text-black">
      <TitleBar />
      <Header />
      <div className="mt-px flex min-h-0 flex-1">
        <Sidebar />
        <main className="relative min-w-0 flex-1">
          <Board />
          {popOpen && <Popview onClose={() => setPopOpen(false)} />}
        </main>
        <ToolPanel />
      </div>
      <CommandBar />
      <StatusBar />
      <Taskbar />
    </div>
  );
}
